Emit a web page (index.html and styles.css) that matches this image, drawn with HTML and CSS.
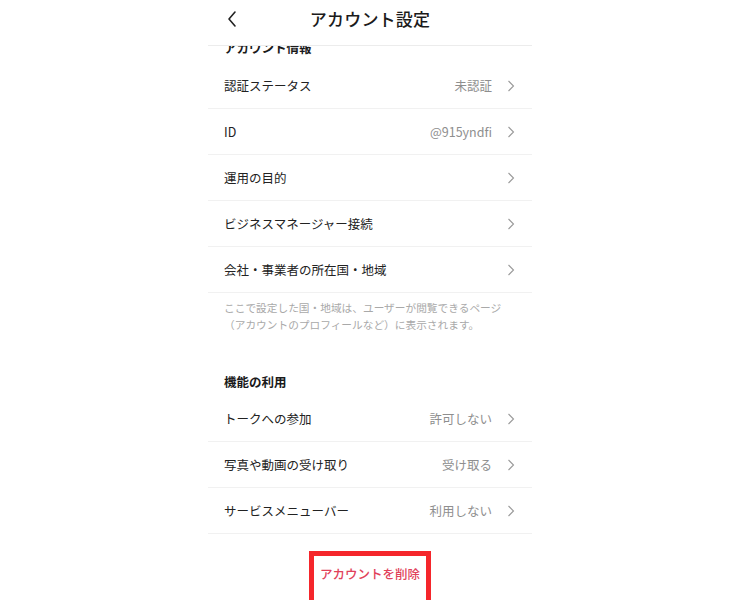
FILE: index.html
```html
<!DOCTYPE html>
<html lang="ja">
<head>
<meta charset="utf-8">
<title>アカウント設定</title>
<link rel="stylesheet" href="styles.css">
</head>
<body>
<div class="screen">
  <header class="topbar">
    <svg class="back" width="12" height="18" viewBox="0 0 12 18"><polyline points="9,2 3,9 9,16" fill="none" stroke="#222" stroke-width="1.6" stroke-linecap="round" stroke-linejoin="round"/></svg>
    <h1 class="title">アカウント設定</h1>
  </header>
  <main class="content">
    <div class="sec-title first">アカウント情報</div>
    <div class="row"><span class="label">認証ステータス</span><span class="value">未認証</span><svg class="chev" width="8" height="12" viewBox="0 0 8 12"><polyline points="1.5,1 6.5,6 1.5,11" fill="none" stroke="#9a9a9a" stroke-width="1.1"/></svg></div>
    <div class="row"><span class="label">ID</span><span class="value">@915yndfi</span><svg class="chev" width="8" height="12" viewBox="0 0 8 12"><polyline points="1.5,1 6.5,6 1.5,11" fill="none" stroke="#9a9a9a" stroke-width="1.1"/></svg></div>
    <div class="row"><span class="label">運用の目的</span><span class="value"></span><svg class="chev" width="8" height="12" viewBox="0 0 8 12"><polyline points="1.5,1 6.5,6 1.5,11" fill="none" stroke="#9a9a9a" stroke-width="1.1"/></svg></div>
    <div class="row"><span class="label">ビジネスマネージャー接続</span><span class="value"></span><svg class="chev" width="8" height="12" viewBox="0 0 8 12"><polyline points="1.5,1 6.5,6 1.5,11" fill="none" stroke="#9a9a9a" stroke-width="1.1"/></svg></div>
    <div class="row"><span class="label">会社・事業者の所在国・地域</span><span class="value"></span><svg class="chev" width="8" height="12" viewBox="0 0 8 12"><polyline points="1.5,1 6.5,6 1.5,11" fill="none" stroke="#9a9a9a" stroke-width="1.1"/></svg></div>
    <p class="note">ここで設定した国・地域は、ユーザーが閲覧できるページ<br>（アカウントのプロフィールなど）に表示されます。</p>
    <div class="sec-title">機能の利用</div>
    <div class="row"><span class="label">トークへの参加</span><span class="value">許可しない</span><svg class="chev" width="8" height="12" viewBox="0 0 8 12"><polyline points="1.5,1 6.5,6 1.5,11" fill="none" stroke="#9a9a9a" stroke-width="1.1"/></svg></div>
    <div class="row"><span class="label">写真や動画の受け取り</span><span class="value">受け取る</span><svg class="chev" width="8" height="12" viewBox="0 0 8 12"><polyline points="1.5,1 6.5,6 1.5,11" fill="none" stroke="#9a9a9a" stroke-width="1.1"/></svg></div>
    <div class="row"><span class="label">サービスメニューバー</span><span class="value">利用しない</span><svg class="chev" width="8" height="12" viewBox="0 0 8 12"><polyline points="1.5,1 6.5,6 1.5,11" fill="none" stroke="#9a9a9a" stroke-width="1.1"/></svg></div>
    <div class="delete-wrap"><div class="delete">アカウントを削除</div></div>
  </main>
</div>
</body>
</html>
```
FILE: styles.css
```css
html, body {
  margin: 0;
  padding: 0;
  background: #ffffff;
  height: 100%;
  overflow: hidden;
}
body {
  font-family: "Noto Sans CJK JP", "Noto Sans", sans-serif;
  color: #1f1f1f;
}
.screen {
  width: 324px;
  margin: 0 auto;
  height: 600px;
  display: flex;
  flex-direction: column;
}
.topbar {
  height: 45px;
  flex: none;
  display: flex;
  align-items: center;
  justify-content: center;
  position: relative;
  border-bottom: 1px solid #ececec;
  background: #fff;
  z-index: 2;
}
.back {
  position: absolute;
  left: 18px;
  top: 10px;
}
.title {
  margin: 0;
  font-size: 17px;
  font-weight: 500;
  line-height: 20px;
  color: #1b1b1b;
  margin-top: -8px;
  letter-spacing: 0.2px;
}
.content {
  flex: 1;
  overflow: hidden;
}
.sec-title {
  font-size: 12.5px;
  font-weight: 700;
  line-height: 20px;
  padding: 0 16px 4px;
  color: #1a1a1a;
  margin-top: 39px;
}
.sec-title.first {
  margin-top: -8px;
  padding-bottom: 5px;
}
.row {
  height: 45px;
  border-bottom: 1px solid #f1f1f1;
  display: flex;
  align-items: center;
  padding: 0 17px 0 16px;
  font-size: 12.5px;
}
.label {
  flex: 1;
  color: #222;
}
.value {
  color: #8e8e8e;
  margin-right: 15px;
}
.chev {
  flex: none;
}
.note {
  margin: 0;
  padding: 6px 16px 0 16px;
  font-size: 10.7px;
  line-height: 17px;
  color: #a9a9a9;
}
.delete-wrap {
  display: flex;
  justify-content: center;
  padding-top: 17px;
}
.delete {
  border: 5px solid #f5262b;
  border-bottom: none;
  padding: 10px 5.5px 30px;
  font-size: 12.5px;
  line-height: 16px;
  font-weight: 500;
  color: #e1415a;
}
```
